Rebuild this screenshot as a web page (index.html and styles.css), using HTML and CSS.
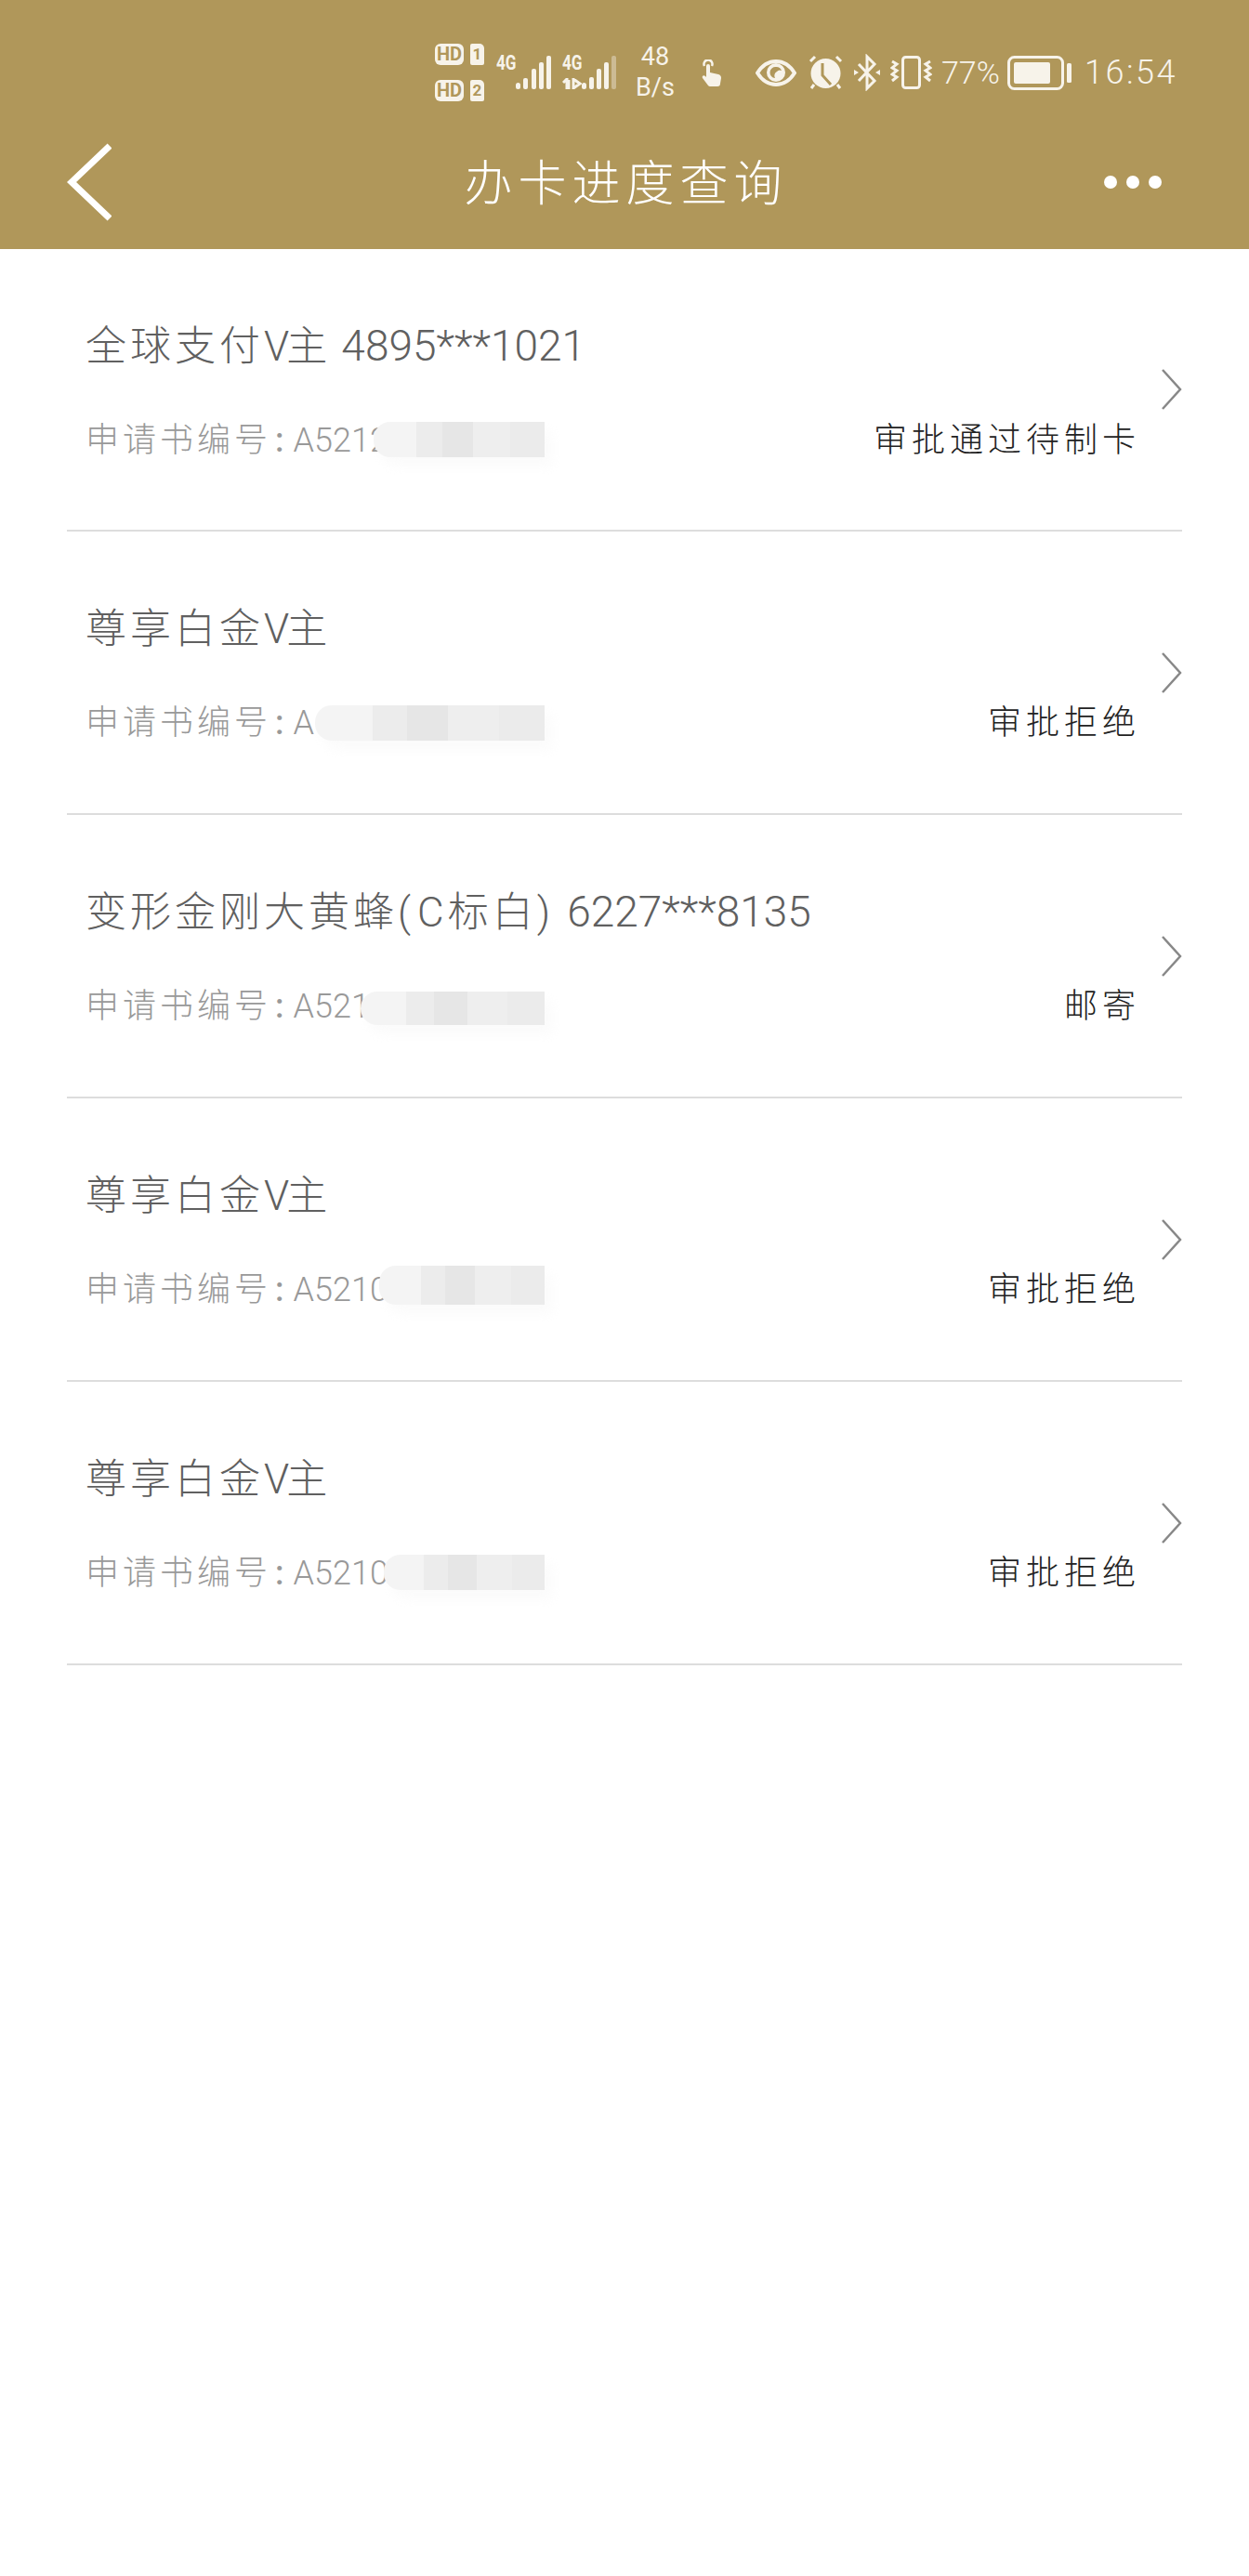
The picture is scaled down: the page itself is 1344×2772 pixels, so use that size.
FILE: index.html
```html
<!DOCTYPE html>
<html lang="zh-CN">
<head>
    <meta charset="UTF-8">
    <title>办卡进度查询</title>
    <link rel="stylesheet" href="styles.css">
</head>
<body>
    <header class="header">
        <div class="status-bar">
            <div class="sims">
                <div class="sim-row"><span class="hd">HD</span><span class="sim">1</span></div>
                <div class="sim-row"><span class="hd">HD</span><span class="sim">2</span></div>
            </div>
            <div class="signal signal-first">
                <span class="net">4G</span>
                <svg width="39" height="36" viewBox="0 0 39 36">
                    <rect x="1" y="29" width="5" height="7" rx="2.500"/>
                    <rect x="9" y="24" width="5" height="12" rx="2"/>
                    <rect x="18" y="14" width="5" height="22" rx="2"/>
                    <rect x="26" y="7" width="5" height="29" rx="2"/>
                    <rect x="34" y="0" width="5" height="36" rx="2"/>
                </svg>
            </div>
            <div class="signal signal-second">
                <span class="net">4G</span>
                <svg class="arrows" width="21" height="12" viewBox="0 0 21 12">
                    <path d="M5 12V1L1 5M7 12V2M12 0V11L19 6L12 1"/>
                </svg>
                <svg width="39" height="36" viewBox="0 0 39 36">
                    <rect x="1" y="29" width="5" height="7" rx="2.500"/>
                    <rect x="9" y="23" width="5" height="13" rx="2"/>
                    <rect x="17" y="14" width="5" height="22" rx="2"/>
                    <rect x="25" y="7" width="5" height="29" rx="2"/>
                    <rect class="bar-off" x="33" y="0" width="5" height="36" rx="2"/>
                </svg>
            </div>
            <div class="speed"><span>48</span><span>B/s</span></div>
            <svg class="icon icon-hand" width="22" height="29" viewBox="0 0 22 29">
                <path class="line-thin" d="M3 7a4.500 4.500 0 1 1 8 0"/>
                <path class="fill" d="M5 7a2 2 0 0 1 4 0v7l9 2c2 .5 3 2 3 4l-1 6a3 3 0 0 1-3 3H9a3 3 0 0 1-2-1l-6-8c-1-2 1-4 3-2l1 1z"/>
            </svg>
            <svg class="icon icon-eye" width="44" height="29" viewBox="0 0 44 29">
                <path class="line" d="M2 14.500C8 5 15 2 22 2s14 3 20 12.500C36 24 29 27 22 27S8 24 2 14.500z"/>
                <circle class="fill" cx="22" cy="14" r="10"/>
                <path class="cut" d="M22 8a6 6 0 0 0-1 12a5 5 0 0 1 2-7a4 4 0 0 1 5-1a6 6 0 0 0-6-4z"/>
            </svg>
            <svg class="icon icon-alarm" width="39" height="38" viewBox="0 0 39 38">
                <circle class="fill" cx="19.500" cy="20" r="16"/>
                <path class="cut-line" d="M16 9v13l9 10"/>
                <path class="line-mid" d="M3 7l5-5M31 2l5 5M7 32l-3 4M32 32l3 4"/>
            </svg>
            <svg class="icon icon-bt" width="28" height="40" viewBox="0 0 28 40">
                <path class="line-mid" d="M5 11L22 29L14 37V3L22 11L5 29"/>
                <path class="fill" d="M0 17l5 3l-5 3zM28 17l-5 3l5 3z"/>
            </svg>
            <svg class="icon icon-vib" width="45" height="36" viewBox="0 0 45 36">
                <rect class="line-mid" x="13.500" y="1.500" width="18" height="33" rx="3"/>
                <path class="line-mid" d="M2 6l5 3l-5 4l5 3l-5 4l5 3l-5 4M43 6l-5 3l5 4l-5 3l5 4l-5 3l5 4"/>
            </svg>
            <span class="percent">77%</span>
            <svg class="icon icon-battery" width="69" height="37" viewBox="0 0 69 37">
                <rect class="line-mid" x="1.500" y="1.500" width="58" height="34" rx="6"/>
                <rect class="fill" x="7" y="7" width="39" height="23" rx="2"/>
                <rect class="fill" x="64" y="8" width="5" height="21" rx="1.500"/>
            </svg>
            <span class="time">16:54</span>
        </div>
        <nav class="nav">
            <div class="nav-back">
                <svg width="48" height="84" viewBox="0 0 48 84">
                    <path d="M46 3L5 42L46 81" fill="none" stroke="#fff" stroke-width="7"/>
                </svg>
            </div>
            <h1 class="nav-title">办卡进度查询</h1>
            <div class="nav-more"><i></i><i></i><i></i></div>
        </nav>
    </header>

    <ul class="list">
        <li class="row">
            <div class="row-main">
                <div class="card-name">全球支付<span class="card-v">V</span>主<span class="card-no"> 4895***1021</span></div>
                <div class="row-sub">
                    <span class="app-no">申请书编号<span class="colon">:</span><span class="app-val">A5212</span></span>
                    <span class="state">审批通过待制卡</span>
                </div>
            </div>
            <svg class="chevron" width="22" height="44" viewBox="0 0 22 44"><path d="M1 1L20 22L1 43"/></svg>
            <div class="mask mask-1"></div>
        </li>
        <li class="row">
            <div class="row-main">
                <div class="card-name">尊享白金<span class="card-v">V</span>主</div>
                <div class="row-sub">
                    <span class="app-no">申请书编号<span class="colon">:</span><span class="app-val">A</span></span>
                    <span class="state">审批拒绝</span>
                </div>
            </div>
            <svg class="chevron" width="22" height="44" viewBox="0 0 22 44"><path d="M1 1L20 22L1 43"/></svg>
            <div class="mask mask-2"></div>
        </li>
        <li class="row">
            <div class="row-main">
                <div class="card-name">变形金刚大黄蜂<span class="card-paren">(</span>C标白<span class="card-paren">)</span><span class="card-no"> 6227***8135</span></div>
                <div class="row-sub">
                    <span class="app-no">申请书编号<span class="colon">:</span><span class="app-val">A5211</span></span>
                    <span class="state">邮寄</span>
                </div>
            </div>
            <svg class="chevron" width="22" height="44" viewBox="0 0 22 44"><path d="M1 1L20 22L1 43"/></svg>
            <div class="mask mask-3"></div>
        </li>
        <li class="row">
            <div class="row-main">
                <div class="card-name">尊享白金<span class="card-v">V</span>主</div>
                <div class="row-sub">
                    <span class="app-no">申请书编号<span class="colon">:</span><span class="app-val">A5210</span></span>
                    <span class="state">审批拒绝</span>
                </div>
            </div>
            <svg class="chevron" width="22" height="44" viewBox="0 0 22 44"><path d="M1 1L20 22L1 43"/></svg>
            <div class="mask mask-4"></div>
        </li>
        <li class="row">
            <div class="row-main">
                <div class="card-name">尊享白金<span class="card-v">V</span>主</div>
                <div class="row-sub">
                    <span class="app-no">申请书编号<span class="colon">:</span><span class="app-val">A52108</span></span>
                    <span class="state">审批拒绝</span>
                </div>
            </div>
            <svg class="chevron" width="22" height="44" viewBox="0 0 22 44"><path d="M1 1L20 22L1 43"/></svg>
            <div class="mask mask-5"></div>
        </li>
    </ul>
</body>
</html>
```

FILE: styles.css
```css
* {
    box-sizing: border-box;
}

body {
    margin: 0;
    min-height: 2772px;
    background: #fff;
    font-family: Roboto, "Noto Sans CJK SC", sans-serif;
}

.header {
    height: 268px;
    background: #b0975a;
    color: #f7f3ea;
}

/* status bar */
.status-bar {
    height: 125px;
    padding: 31px 80px 0 0;
    display: flex;
    justify-content: flex-end;
    align-items: center;
}

.sims {
    display: flex;
    flex-direction: column;
    gap: 16px;
}

.sim-row {
    display: flex;
    gap: 7px;
}

.hd,
.sim {
    height: 23px;
    background: #f7f3ea;
    color: #b0975a;
    font-size: 20px;
    font-weight: 700;
    line-height: 23px;
    text-align: center;
}

.hd {
    width: 31px;
    border-radius: 6px;
}

.sim {
    width: 15px;
    border-radius: 2px 5px 2px 2px;
    font-size: 17px;
}

.signal {
    position: relative;
    width: 59px;
    height: 36px;
    display: flex;
    justify-content: flex-end;
    fill: #f7f3ea;
}

.signal-first {
    margin-left: 13px;
}

.signal-second {
    margin-left: 12px;
}

.net {
    position: absolute;
    left: 0;
    top: -2px;
    font-size: 22px;
    font-weight: 700;
    line-height: 20px;
    transform: scaleX(0.78);
    transform-origin: left;
}

.arrows {
    position: absolute;
    left: 0;
    bottom: 0;
    fill: none;
    stroke: #f7f3ea;
    stroke-width: 3;
}

.bar-off {
    opacity: 0.4;
}

.speed {
    width: 46px;
    margin-left: 18px;
    display: flex;
    flex-direction: column;
    align-items: center;
    font-size: 27px;
    line-height: 33px;
}

.icon .fill {
    fill: #f7f3ea;
}

.icon .line,
.icon .line-mid,
.icon .line-thin {
    fill: none;
    stroke: #f7f3ea;
}

.icon .line {
    stroke-width: 4;
}

.icon .line-mid {
    stroke-width: 3;
}

.icon .line-thin {
    stroke-width: 2.500;
}

.icon .cut {
    fill: #b0975a;
}

.icon .cut-line {
    fill: none;
    stroke: #b0975a;
    stroke-width: 3;
}

.icon-hand {
    margin-left: 27px;
}

.icon-eye {
    margin-left: 36px;
}

.icon-alarm {
    margin-left: 12px;
}

.icon-bt {
    margin-left: 11px;
}

.icon-vib {
    margin-left: 11px;
}

.percent {
    width: 61px;
    margin-left: 10px;
    font-size: 34px;
    font-weight: 300;
}

.icon-battery {
    margin-left: 10px;
}

.time {
    width: 97px;
    margin-left: 14px;
    font-size: 36px;
    font-weight: 300;
    letter-spacing: 2.500px;
    white-space: nowrap;
}

/* nav */
.nav {
    height: 142px;
    padding: 0 94px 0 72px;
    display: flex;
    align-items: center;
}

.nav-back {
    width: 84px;
    height: 84px;
}

.nav-title {
    flex: 1;
    margin: 0;
    padding: 0 0 5px 3px;
    color: #fff;
    font-size: 52px;
    font-weight: 300;
    letter-spacing: 6px;
    text-align: center;
}

.nav-more {
    width: 62px;
    display: flex;
    justify-content: space-between;
}

.nav-more i {
    width: 14px;
    height: 14px;
    border-radius: 50%;
    background: #fff;
}

/* list */
.list {
    margin: 0;
    padding: 0;
    list-style: none;
}

.row {
    position: relative;
    height: 305px;
    margin: 0 72px;
    padding-left: 20px;
    border-bottom: 2px solid #ddd;
    display: flex;
    align-items: center;
}

.row:first-child {
    height: 304px;
}

.row-main {
    flex: 1;
    padding-top: 2px;
}

.card-name {
    color: #606060;
    font-size: 44px;
    font-weight: 300;
    letter-spacing: 4px;
    line-height: 60px;
    white-space: nowrap;
}

.card-v {
    letter-spacing: -3px;
}

.card-paren {
    letter-spacing: 7px;
}

.card-no {
    font-size: 46px;
    letter-spacing: 0;
}

.row-sub {
    margin-top: 46px;
    display: flex;
    justify-content: space-between;
    line-height: 50px;
    font-size: 36px;
    font-weight: 300;
    letter-spacing: 4px;
}

.app-no {
    color: #999;
}

.colon {
    margin: 0 6px 0 4px;
    font-weight: 500;
}

.app-val {
    letter-spacing: 0;
}

.state {
    margin-right: -4px;
    color: #222;
    letter-spacing: 5px;
}

.chevron {
    margin-left: 27px;
    fill: none;
    stroke: #888;
    stroke-width: 2.500;
}

/* blurred out part of the number */
.mask {
    position: absolute;
    background: linear-gradient(90deg, #f4f4f4 0 25%, #ececec 25% 40%, #e6e6e6 40% 58%, #eeeeee 58% 80%, #ebebeb 80%);
    border-radius: 18px 0 0 18px;
    box-shadow: 8px 10px 12px rgba(245, 245, 245, 0.4);
}

.mask-1 {
    left: 330px;
    width: 184px;
    top: 186px;
    height: 38px;
}

.mask-2 {
    left: 267px;
    width: 247px;
    top: 187px;
    height: 38px;
}

.mask-3 {
    left: 316px;
    width: 198px;
    top: 190px;
    height: 36px;
}

.mask-4 {
    left: 336px;
    width: 178px;
    top: 180px;
    height: 42px;
}

.mask-5 {
    left: 341px;
    width: 173px;
    top: 186px;
    height: 38px;
}
```
